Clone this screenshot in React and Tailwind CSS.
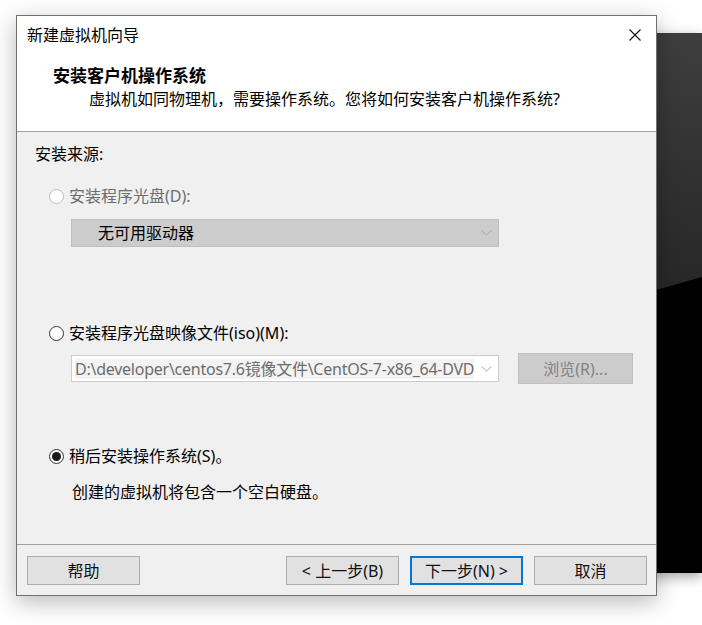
const FONT = { fontFamily: '"Noto Sans", "Noto Sans CJK SC", sans-serif' }

function Radio({ checked = false, disabled = false }) {
  return (
    <span
      className={`flex h-[15px] w-[15px] shrink-0 items-center justify-center rounded-full border bg-white ${
        disabled ? 'border-[#bcbcbc]' : 'border-[#333333]'
      }`}
    >
      {checked && <span className="h-[9px] w-[9px] rounded-full bg-[#1a1a1a]" />}
    </span>
  )
}

function Chevron({ color = '#9a9a9a' }) {
  return (
    <svg width="11" height="6" viewBox="0 0 11 6" className="shrink-0">
      <path d="M0.5 0.5 L5.5 5 L10.5 0.5" fill="none" stroke={color} strokeWidth="1" />
    </svg>
  )
}

function Button({ children, primary = false }) {
  return (
    <div
      className={`flex h-[29px] w-[113px] items-center justify-center bg-[#e1e1e1] text-[16px] leading-[20px] text-[#111111] ${
        primary ? 'border-2 border-[#0078d7]' : 'border border-[#adadad]'
      }`}
    >
      {children}
    </div>
  )
}

export default function App() {
  return (
    <div className="relative h-[625px] w-[702px] overflow-hidden bg-white" style={FONT}>
      {/* window behind, on the right */}
      <div className="absolute left-[400px] top-[33px] h-[540px] w-[302px] shadow-[0_4px_12px_rgba(0,0,0,0.35)]">
        <svg width="302" height="540" viewBox="0 0 302 540" className="block">
          <defs>
            <linearGradient id="dk" x1="0" y1="0" x2="0" y2="1">
              <stop offset="0" stopColor="#3e3e3e" />
              <stop offset="0.5" stopColor="#262626" />
              <stop offset="1" stopColor="#1e1e1e" />
            </linearGradient>
          </defs>
          <rect width="302" height="540" fill="url(#dk)" />
          <polygon points="0,330 302,244 302,540 0,540" fill="#000000" />
        </svg>
      </div>

      {/* wizard window */}
      <div className="absolute left-[16px] top-[15px] flex h-[581px] w-[641px] flex-col border border-[#707070] bg-[#f0f0f0] shadow-[0_6px_22px_rgba(0,0,0,0.28)]">
        <div className="flex h-[115px] flex-col bg-white">
          <div className="flex h-[38px] items-center justify-between pl-[10px] pr-[15px]">
            <span className="text-[16px] leading-[20px] text-black">新建虚拟机向导</span>
            <svg width="12" height="12" viewBox="0 0 12 12">
              <path d="M0.5 0.5 L11.5 11.5 M11.5 0.5 L0.5 11.5" stroke="#111" strokeWidth="1.1" />
            </svg>
          </div>
          <div className="mt-[12px] pl-[36px] text-[17px] font-bold leading-[20px] text-black">安装客户机操作系统</div>
          <div className="mt-[3px] pl-[72px] text-[16px] leading-[20px] text-black">
            虚拟机如同物理机，需要操作系统。您将如何安装客户机操作系统?
          </div>
        </div>
        <div className="h-px bg-[#a0a0a0]" />

        <div className="flex h-[412px] flex-col text-[16px] leading-[20px]">
          <div className="mt-[12px] pl-[18px] text-black">安装来源:</div>

          <div className="mt-[22px] flex items-center gap-[5px] pl-[32px] text-[#6d6d6d]">
            <Radio disabled />
            <span>安装程序光盘(D):</span>
          </div>
          <div className="ml-[54px] mt-[13px] flex h-[28px] w-[428px] items-center justify-between border border-[#bfbfbf] bg-[#cccccc] pl-[26px] pr-[6px] text-black">
            <span>无可用驱动器</span>
            <Chevron color="#a8a8a8" />
          </div>

          <div className="mt-[76px] flex items-center gap-[5px] pl-[32px] text-black">
            <Radio />
            <span>安装程序光盘映像文件(iso)(M):</span>
          </div>
          <div className="ml-[54px] mt-[10px] flex items-center">
            <div className="flex h-[27px] w-[428px] items-center justify-between border border-[#cccccc] bg-white pl-[3px] pr-[6px]">
              <span className="w-[399px] whitespace-nowrap bg-[#f3f3f3] tracking-[-0.25px] text-[#6d6d6d]">
                D:\developer\centos7.6镜像文件\CentOS-7-x86_64-DVD
              </span>
              <Chevron color="#a8a8a8" />
            </div>
            <div className="ml-[19px] flex h-[31px] w-[115px] items-center justify-center border border-[#bfbfbf] bg-[#cccccc] text-[#838383]">
              浏览(R)...
            </div>
          </div>

          <div className="mt-[62px] flex items-center gap-[5px] pl-[32px] text-black">
            <Radio checked />
            <span>稍后安装操作系统(S)。</span>
          </div>
          <div className="mt-[16px] pl-[55px] text-black">创建的虚拟机将包含一个空白硬盘。</div>
        </div>

        <div className="h-px bg-[#a0a0a0]" />
        <div className="flex flex-1 items-start pl-[10px] pr-[9px] pt-[11px]">
          <Button>帮助</Button>
          <div className="ml-auto flex gap-[11px]">
            <Button>&lt; 上一步(B)</Button>
            <Button primary>下一步(N) &gt;</Button>
            <Button>取消</Button>
          </div>
        </div>
      </div>
    </div>
  )
}
